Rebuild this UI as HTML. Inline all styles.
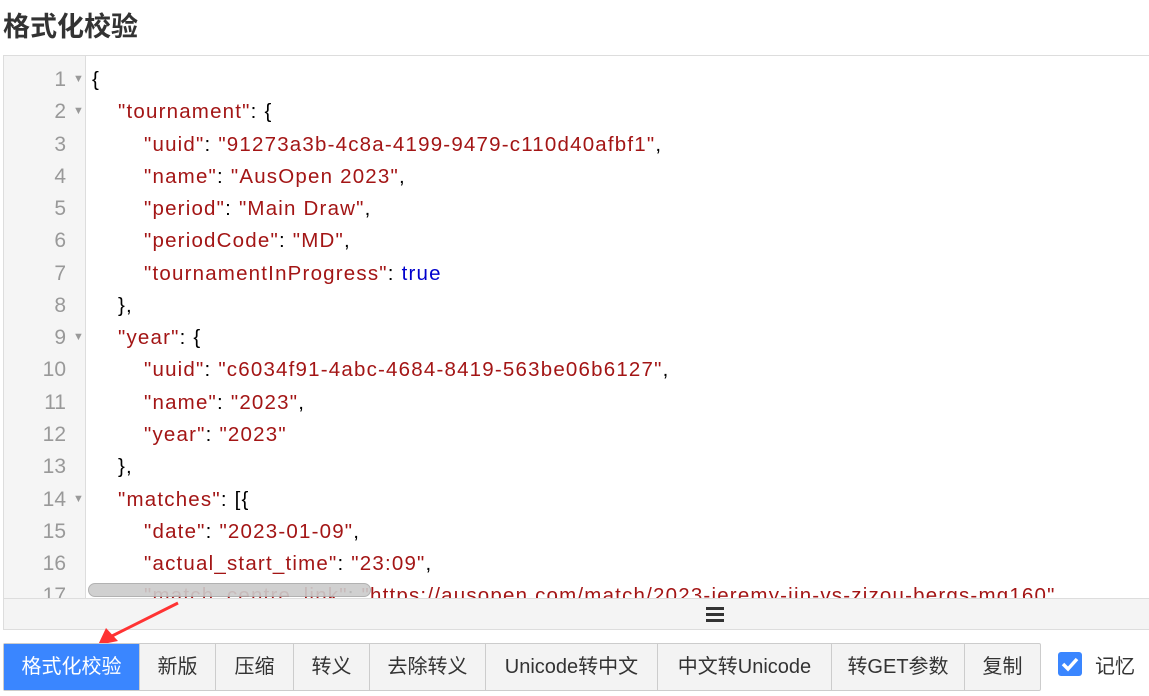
<!DOCTYPE html>
<html><head><meta charset="utf-8"><style>
*{margin:0;padding:0;box-sizing:border-box}
body{width:1149px;height:696px;background:#fff;font-family:"Liberation Sans","Noto Sans CJK SC",sans-serif;position:relative;overflow:hidden;color:#333}
h1{position:absolute;left:3px;top:7px;font-size:27px;font-weight:bold;color:#333;font-family:"Noto Sans CJK SC",sans-serif;line-height:36px}
.ed{position:absolute;left:3px;top:55px;width:1150px;height:575px;border:1px solid #ddd;overflow:hidden}
.gut{position:absolute;left:0;top:0;width:82px;height:542px;background:#f5f5f5;border-right:1px solid #ddd}
.ln{position:absolute;left:0;width:62px;text-align:right;font-size:21px;color:#999;line-height:32.27px}
.fold{position:absolute;left:69px;font-size:11px;color:#999}
.code{position:absolute;left:88px;font-size:20.5px;letter-spacing:1.2px;line-height:32.27px;white-space:pre;color:#000}
.s{color:#a31515}.k{color:#a31515}.b{color:#0000cd}
.bar{position:absolute;left:0;top:542px;width:100%;height:32px;background:#f4f4f4;border-top:1px solid #ddd}
.thumb{position:absolute;left:84px;top:527px;width:283px;height:14px;background:#ccc;border:1px solid #aaa;border-radius:7px;opacity:.9}
.btns{position:absolute;left:3px;top:643px;height:48px;display:flex;border:1px solid #ccc;border-radius:2px;background:#f3f3f3}
.btns div{height:46px;line-height:46px;font-size:20px;text-align:center;border-left:1px solid #ccc;color:#333}
.btns div:first-child{border-left:none;background:#3a86ff;color:#fff}
.cb{position:absolute;left:1058px;top:652px;width:24px;height:24px;background:#3a86ff;border-radius:3px}
.mem{position:absolute;left:1095px;top:650px;font-size:20px;color:#333}
</style></head><body>
<h1>格式化校验</h1>
<div class="ed">
<div class="gut"></div>
<div id="lines"></div>
<div class="thumb"></div>
<div class="bar"><div style="position:absolute;left:702px;top:6px;width:18px">
<div style="height:3px;background:#333;margin-top:2px"></div><div style="height:3px;background:#333;margin-top:3px"></div><div style="height:3px;background:#333;margin-top:3px"></div></div></div>
</div>
<svg style="position:absolute;left:0;top:0" width="1149" height="696"><path d="M178 603 L112 636" stroke="#f33" stroke-width="3"/><path d="M98 645 L106 628 L118 641 Z" fill="#f33"/></svg>
<div class="btns">
<div style="width:135px">格式化校验</div><div style="width:76px">新版</div><div style="width:78px">压缩</div><div style="width:76px">转义</div><div style="width:116px">去除转义</div><div style="width:172px">Unicode转中文</div><div style="width:174px">中文转Unicode</div><div style="width:133px">转GET参数</div><div style="width:76px">复制</div>
</div>
<div class="cb"><svg width="24" height="24"><path d="M5 12 L10 17 L19 7" stroke="#fff" stroke-width="3.5" fill="none"/></svg></div>
<div class="mem">记忆</div>
<script>
var L=[[0,'{'],[1,'<span class="k">"tournament"</span>: {'],[2,'<span class="k">"uuid"</span>: <span class="s">"91273a3b-4c8a-4199-9479-c110d40afbf1"</span>,'],[2,'<span class="k">"name"</span>: <span class="s">"AusOpen 2023"</span>,'],[2,'<span class="k">"period"</span>: <span class="s">"Main Draw"</span>,'],[2,'<span class="k">"periodCode"</span>: <span class="s">"MD"</span>,'],[2,'<span class="k">"tournamentInProgress"</span>: <span class="b">true</span>'],[1,'},'],[1,'<span class="k">"year"</span>: {'],[2,'<span class="k">"uuid"</span>: <span class="s">"c6034f91-4abc-4684-8419-563be06b6127"</span>,'],[2,'<span class="k">"name"</span>: <span class="s">"2023"</span>,'],[2,'<span class="k">"year"</span>: <span class="s">"2023"</span>'],[1,'},'],[1,'<span class="k">"matches"</span>: [{'],[2,'<span class="k">"date"</span>: <span class="s">"2023-01-09"</span>,'],[2,'<span class="k">"actual_start_time"</span>: <span class="s">"23:09"</span>,'],[2,'<span class="k">"match_centre_link"</span>: <span class="s">"https://ausopen.com/match/2023-jeremy-jin-vs-zizou-bergs-mq160"</span>']];
var f={1:1,2:1,9:1,14:1},h='';
L.forEach(function(l,i){var t=8+i*32.27;h+='<div class="ln" style="top:'+t+'px">'+(i+1)+'</div>';if(f[i+1])h+='<div class="fold" style="top:'+(t+9)+'px">▼</div>';h+='<div class="code" style="top:'+t+'px;left:'+(88+l[0]*26)+'px">'+l[1]+'</div>';});
document.getElementById('lines').innerHTML=h;
</script>
</body></html>
